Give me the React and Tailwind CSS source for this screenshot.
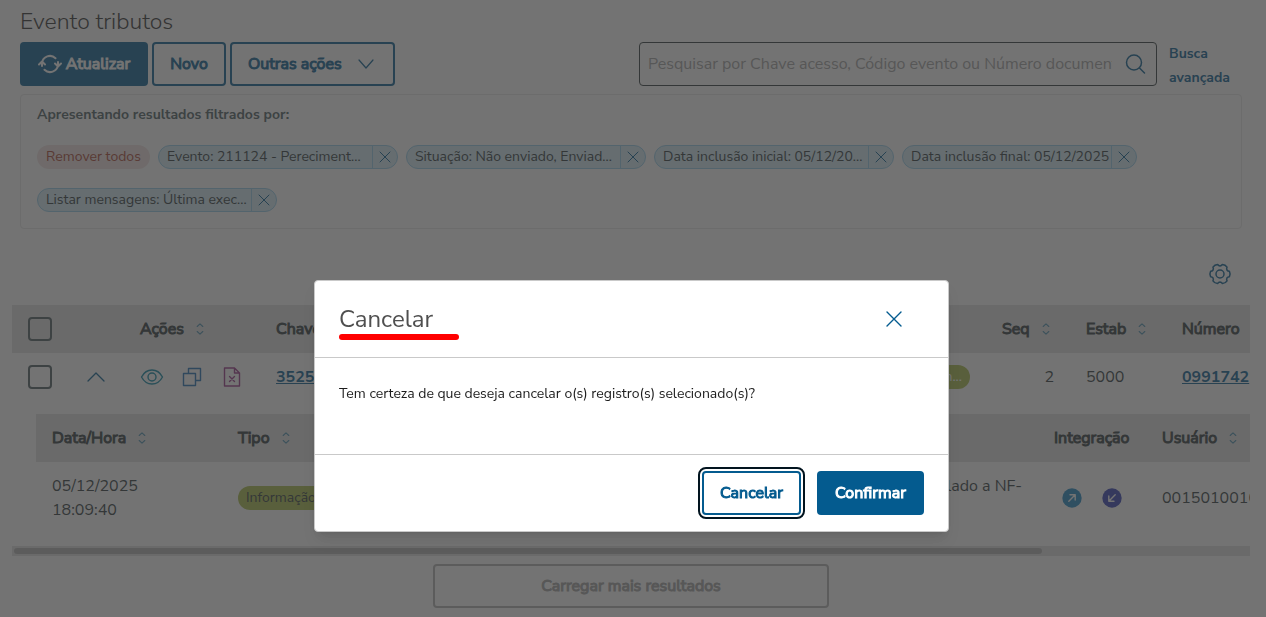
import React from "react";

const GEAR_PATH = (() => {
  const at = (radius, degrees) => {
    const a = (degrees * Math.PI) / 180;
    return `${(12 + radius * Math.cos(a)).toFixed(2)} ${(12 + radius * Math.sin(a)).toFixed(2)}`;
  };
  let d = `M${at(8, -30)}`;
  for (let k = 0; k < 6; k += 1) {
    const c = k * 60;
    d += ` Q${at(8.2, c - 20)} ${at(9.8, c - 16)} Q${at(10.8, c)} ${at(9.8, c + 16)} Q${at(8.2, c + 20)} ${at(8, c + 30)}`;
  }
  return `${d}Z`;
})();

function Icon({ className, children, box = "0 0 24 24", width = 1.5 }) {
  return (
    <svg
      className={className}
      viewBox={box}
      fill="none"
      stroke="currentColor"
      strokeWidth={width}
      strokeLinecap="round"
      strokeLinejoin="round"
      aria-hidden="true"
    >
      {children}
    </svg>
  );
}

function SortIcon() {
  return (
    <Icon className="h-4 w-2 shrink-0 text-[#4b8fb0]" box="0 0 8 16" width={1.1}>
      <path d="M1.200 5.500 4 2.800 6.800 5.500M1.200 10.500 4 13.200 6.800 10.500" />
    </Icon>
  );
}

function Th({ children, sort = false, className = "" }) {
  return (
    <th className={`h-12 px-4 text-left font-normal ${className}`}>
      <span className="flex items-center gap-3 whitespace-nowrap">
        <span className="[-webkit-text-stroke:1px_currentColor]">{children}</span>
        {sort && <SortIcon />}
      </span>
    </th>
  );
}

function Checkbox({ label }) {
  return (
    <input
      type="checkbox"
      aria-label={label}
      className="block size-6 appearance-none rounded-[4px] border-2 border-[#4a5c60]"
    />
  );
}

function Chip({ children, className = "w-60" }) {
  return (
    <li
      className={`flex h-6 items-stretch rounded-full border border-[#94cdea] bg-[#d2ebf6] ${className}`}
    >
      <span className="flex-1 overflow-hidden pl-2 leading-[22px] whitespace-nowrap">{children}</span>
      <button
        type="button"
        aria-label="Remover filtro"
        className="flex w-[25px] items-center justify-center border-l border-[#94cdea] text-[#045b8f]"
      >
        <Icon className="size-3" box="0 0 12 12" width={1}>
          <path d="m1 1 10 10M11 1 1 11" />
        </Icon>
      </button>
    </li>
  );
}

function Toolbar() {
  return (
    <div className="flex items-start justify-between">
      <div className="flex items-center gap-1 [-webkit-text-stroke:1px_currentColor]">
        <button
          type="button"
          className="flex h-11 w-32 items-center justify-center gap-1 rounded-[4px] bg-[#045b8f] text-white"
        >
          <Icon className="h-5 w-6" box="0 0 24 20" width={2}>
            <path d="M4 12V9a8 8 0 0 1 13.500-4.800M1 10.500 4 7.500l3 3M20 8v3a8 8 0 0 1-13.500 4.800M17 9.500l3 3 3-3" />
          </Icon>
          Atualizar
        </button>
        <button
          type="button"
          className="h-11 w-[74px] rounded-[4px] border-2 border-[#045b8f] text-[#045b8f]"
        >
          Novo
        </button>
        <button
          type="button"
          className="flex h-11 w-[165px] items-center gap-4 rounded-[4px] border-2 border-[#045b8f] pl-4 text-[#045b8f]"
        >
          Outras ações
          <Icon className="h-4 w-4" box="0 0 16 16" width={1.2}>
            <path d="m1 4 7 8 7-8" />
          </Icon>
        </button>
      </div>
      <div className="flex items-start gap-3">
        <div className="flex h-11 w-[518px] items-center rounded-[4px] border border-[#2c3739] pr-2 pl-2">
          <input
            type="text"
            aria-label="Pesquisar"
            placeholder="Pesquisar por Chave acesso, Código evento ou Número documento"
            className="min-w-0 flex-1 bg-transparent outline-none placeholder:text-[#a1a1a1]"
          />
          <button type="button" aria-label="Buscar" className="ml-3 text-[#045b8f]">
            <Icon className="size-6">
              <circle cx="10" cy="10.500" r="7.500" />
              <path d="m15.500 16 5 5" />
            </Icon>
          </button>
        </div>
        <a href="#busca" className="w-[73px] text-sm leading-6 font-bold text-[#045b8f]">
          Busca avançada
        </a>
      </div>
    </div>
  );
}

function Filters() {
  return (
    <section className="mt-1 rounded-[4px] border border-[#e6e6e6] px-4 pt-2 pb-4 text-sm text-[#2c3739]">
      <h2 className="leading-6 font-bold text-[#4a5c60]">
        Apresentando resultados filtrados por:
      </h2>
      <ul className="mt-[18px] flex flex-wrap gap-x-2 gap-y-[19px]">
        <li>
          <button
            type="button"
            className="h-6 w-[113px] rounded-full bg-[#f0e2e0] leading-5 text-[#a8402e]"
          >
            Remover todos
          </button>
        </li>
        <Chip>Evento: 211124 - Pereciment...</Chip>
        <Chip>Situação: Não enviado, Enviad...</Chip>
        <Chip>Data inclusão inicial: 05/12/20...</Chip>
        <Chip className="w-[235px]">Data inclusão final: 05/12/2025</Chip>
        <Chip>Listar mensagens: Última exec...</Chip>
      </ul>
    </section>
  );
}

function Messages() {
  return (
    <table className="w-full table-fixed border-collapse">
      <colgroup>
        <col className="w-[186px]" />
        <col className="w-[200px]" />
        <col className="w-[616px]" />
        <col className="w-[108px]" />
        <col />
      </colgroup>
      <thead className="bg-[#e1e1e1]">
        <tr>
          <Th sort>Data/Hora</Th>
          <Th sort>Tipo</Th>
          <Th>Mensagem</Th>
          <Th>Integração</Th>
          <Th sort>Usuário</Th>
        </tr>
      </thead>
      <tbody>
        <tr>
          <td className="px-4 py-3">
            05/12/2025
            <br />
            18:09:40
          </td>
          <td className="px-4">
            <span className="block h-6 w-28 rounded-full bg-[#a8bc48] px-2 text-sm leading-6">
              Informação
            </span>
          </td>
          <td className="px-4">
            <span className="block text-right">vinculado a NF-</span>
            <span className="block">e</span>
          </td>
          <td className="px-4">
            <span className="flex gap-5 pl-2">
              <Icon className="size-5 text-white" box="0 0 20 20" width={1.4}>
                <circle cx="10" cy="10" r="9.700" fill="#1d87c4" stroke="none" />
                <path d="m6.800 13.200 6.400-6.400M8 6.800h5.200V12" />
              </Icon>
              <Icon className="size-5 text-white" box="0 0 20 20" width={1.4}>
                <circle cx="10" cy="10" r="9.700" fill="#2f3cb4" stroke="none" />
                <path d="m13.200 6.800-6.400 6.400M6.800 8v5.200H12" />
              </Icon>
            </span>
          </td>
          <td className="px-4">00150100100</td>
        </tr>
      </tbody>
    </table>
  );
}

function EventTable() {
  return (
    <div className="mx-3 mr-4 mt-[19px] overflow-hidden">
      <table className="w-[1500px] table-fixed border-collapse">
        <colgroup>
          <col className="w-14" />
          <col className="w-14" />
          <col className="w-[136px]" />
          <col className="w-[440px]" />
          <col className="w-[286px]" />
          <col className="w-[84px]" />
          <col className="w-24" />
          <col />
        </colgroup>
        <thead className="bg-[#e1e1e1]">
          <tr>
            <th className="h-12 px-4">
              <Checkbox label="Selecionar todos" />
            </th>
            <th />
            <Th sort>Ações</Th>
            <Th sort>Chave</Th>
            <Th>Situação</Th>
            <Th sort>Seq</Th>
            <Th sort>Estab</Th>
            <Th>Número</Th>
          </tr>
        </thead>
        <tbody>
          <tr>
            <td className="h-12 px-4">
              <Checkbox label="Selecionar registro" />
            </td>
            <td className="px-4">
              <button type="button" aria-label="Recolher" className="block text-[#045b8f]">
                <Icon className="size-6" width={1.3}>
                  <path d="m4 16 8-8 8 8" />
                </Icon>
              </button>
            </td>
            <td className="px-4">
              <div className="flex gap-4">
                <button type="button" aria-label="Visualizar" className="text-[#0a86a4]">
                  <Icon className="size-6" width={1.4}>
                    <path d="M1.500 12C4 7.300 7.500 5 12 5s8 2.300 10.500 7C20 16.700 16.500 19 12 19S4 16.700 1.500 12Z" />
                    <circle cx="12" cy="12" r="4" />
                  </Icon>
                </button>
                <button type="button" aria-label="Duplicar" className="text-[#1f6fb4]">
                  <Icon className="size-6" width={1.4}>
                    <path d="M3.500 8.500h12v12h-12zM8.500 8.500v-5h12v12h-5" />
                  </Icon>
                </button>
                <button type="button" aria-label="Cancelar registro" className="text-[#983486]">
                  <Icon className="size-6" width={1.4}>
                    <path d="M4.500 3h10l5 5v13h-15zM14.500 3v5h5M9.500 11.500l5 5M14.500 11.500l-5 5" />
                  </Icon>
                </button>
              </div>
            </td>
            <td className="px-4">
              <a href="#chave" className="font-bold text-[#045b8f] underline">
                3525
              </a>
            </td>
            <td className="px-4">
              <span className="ml-auto block h-6 w-60 rounded-full bg-[#a8bc48] px-2 text-right text-sm leading-6 text-white">
                n...
              </span>
            </td>
            <td className="px-4 text-right">2</td>
            <td className="px-4">5000</td>
            <td className="px-4">
              <a href="#numero" className="font-bold text-[#045b8f] underline">
                0991742
              </a>
            </td>
          </tr>
          <tr>
            <td colSpan={8} className="pt-[13px] pb-3 pl-6">
              <Messages />
            </td>
          </tr>
        </tbody>
      </table>
      <div className="h-[10px] bg-[#e1e1e1] p-0.5">
        <div className="h-1.5 w-5/6 rounded-full bg-[#b2b2b2]" />
      </div>
    </div>
  );
}

function ConfirmDialog() {
  return (
    <div className="fixed inset-0 flex items-start justify-center bg-[#373737]/70 pt-[280px] pr-[3px]">
      <div
        role="dialog"
        aria-modal="true"
        aria-labelledby="dialog-title"
        className="w-[635px] rounded-[4px] border border-[#c9c9c9] bg-white shadow-lg"
      >
        <header className="flex h-[77px] items-center justify-between border-b border-[#c9c9c9] pr-11 pl-6">
          <h2
            id="dialog-title"
            className="relative text-2xl leading-8 text-[#4f4f4f]"
          >
            Cancelar
            <span className="absolute top-[31px] left-0 h-1.5 w-[120px] rounded-full bg-[#ff0000]" />
          </h2>
          <button type="button" aria-label="Fechar" className="text-[#045b8f]">
            <Icon className="size-5" box="0 0 20 20" width={1.4}>
              <path d="m3 3 14 14M17 3 3 17" />
            </Icon>
          </button>
        </header>
        <p className="h-24 px-6 pt-6 text-sm leading-6 text-[#1d1d1d]">
          Tem certeza de que deseja cancelar o(s) registro(s) selecionado(s)?
        </p>
        <footer className="flex justify-end gap-4 border-t border-[#c9c9c9] px-6 py-4 [-webkit-text-stroke:1px_currentColor]">
          <button
            type="button"
            className="h-11 w-[99px] rounded-[4px] border-2 border-[#045b8f] text-[#045b8f] outline-2 outline-offset-2 outline-[#02141f]"
          >
            Cancelar
          </button>
          <button type="button" className="h-11 w-[107px] rounded-[4px] bg-[#045b8f] text-white">
            Confirmar
          </button>
        </footer>
      </div>
    </div>
  );
}

export default function App() {
  return (
    <main className="min-h-screen bg-white pb-2 font-['Nunito_Sans',Lato,sans-serif] text-base leading-6 text-[#2c3739]">
      <div className="pt-1 pr-6 pl-5">
        <h1 className="mb-0.5 text-[23px] leading-9 font-light text-[#2d2d2d]">Evento tributos</h1>
        <Toolbar />
        <Filters />
      </div>
      <div className="mt-[33px] flex justify-end pr-[34px]">
        <button type="button" aria-label="Configurar colunas" className="block text-[#045b8f]">
          <Icon className="size-6" width={1.5}>
            <path d={GEAR_PATH} />
            <circle cx="12" cy="12" r="4" />
          </Icon>
        </button>
      </div>
      <EventTable />
      <div className="mt-2 flex justify-center pr-1">
        <button
          type="button"
          disabled
          className="h-11 w-[396px] rounded-[4px] border-2 border-[#b2b2b2] text-[#a1a1a1] [-webkit-text-stroke:1px_currentColor]"
        >
          Carregar mais resultados
        </button>
      </div>
      <ConfirmDialog />
    </main>
  );
}
